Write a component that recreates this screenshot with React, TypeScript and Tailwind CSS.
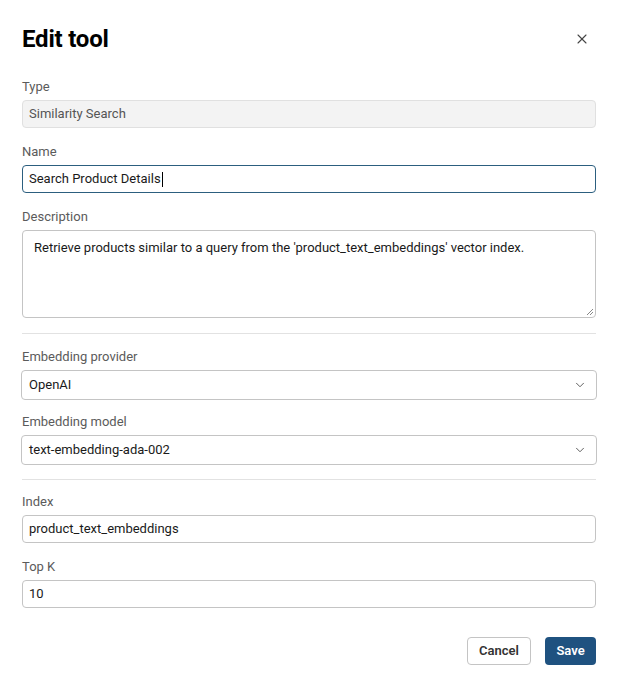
import { ChevronDown, X } from "lucide-react";

type FieldProps = {
  label: string;
  children: React.ReactNode;
};

function Field({ label, children }: FieldProps) {
  return (
    <div className="flex flex-col">
      <label className="mb-[5px] text-[13px] leading-[16px] text-[#5b5b5b]">{label}</label>
      {children}
    </div>
  );
}

function SelectBox({ value }: { value: string }) {
  return (
    <div className="-mx-px flex h-[30px] items-center justify-between rounded-[4px] border border-[#c4c4c4] bg-white pl-[7px] pr-[9px] text-[13px] text-[#1a1a1a]">
      <span>{value}</span>
      <ChevronDown className="h-[14px] w-[14px] text-[#555]" strokeWidth={1.6} />
    </div>
  );
}

export default function App() {
  return (
    <div className="min-h-[688px] bg-white px-[22px] pr-[23px] font-['Roboto',sans-serif] text-[#1a1a1a]">
      <header className="flex items-center justify-between pt-[25px]">
        <h1 className="text-[24px] font-bold leading-[28px] tracking-[-0.2px] text-black">Edit tool</h1>
        <button type="button" aria-label="Close" className="mr-[6px] text-[#444]">
          <X className="h-[16px] w-[16px]" strokeWidth={1.6} />
        </button>
      </header>

      <div className="mt-[26px] flex flex-col gap-[16px]">
        <Field label="Type">
          <div className="flex h-[28px] items-center rounded-[4px] border border-[#e0e0e0] bg-[#f3f3f3] px-[6px] text-[13px] text-[#555]">
            Similarity Search
          </div>
        </Field>

        <Field label="Name">
          <div className="flex h-[28px] items-center rounded-[4px] border border-[#2c5f7f] bg-white px-[6px] text-[13px] text-[#1a1a1a]">
            Search Product Details
            <span className="ml-px inline-block h-[15px] w-px bg-black" />
          </div>
        </Field>

        <Field label="Description">
          <div className="relative h-[88px] rounded-[4px] border border-[#c4c4c4] bg-white px-[11px] pt-[8px] text-[13px] leading-[18px] text-[#1a1a1a]">
            Retrieve products similar to a query from the 'product_text_embeddings' vector index.
            <svg className="absolute bottom-[1px] right-[1px] h-[8px] w-[8px]" viewBox="0 0 8 8">
              <path d="M7 1 L1 7 M7 4 L4 7" stroke="#888" strokeWidth="1" />
            </svg>
          </div>
        </Field>
      </div>

      <div className="mt-[15px] h-px bg-[#e2e2e2]" />

      <div className="mt-[15px] flex flex-col gap-[14px]">
        <Field label="Embedding provider">
          <SelectBox value="OpenAI" />
        </Field>
        <Field label="Embedding model">
          <SelectBox value="text-embedding-ada-002" />
        </Field>
      </div>

      <div className="mt-[14px] h-px bg-[#e2e2e2]" />

      <div className="mt-[14px] flex flex-col gap-[16px]">
        <Field label="Index">
          <div className="flex h-[28px] items-center rounded-[4px] border border-[#c4c4c4] bg-white px-[6px] text-[13px] text-[#1a1a1a]">
            product_text_embeddings
          </div>
        </Field>
        <Field label="Top K">
          <div className="flex h-[28px] items-center rounded-[4px] border border-[#c4c4c4] bg-white px-[6px] text-[13px] text-[#1a1a1a]">
            10
          </div>
        </Field>
      </div>

      <div className="mt-[29px] flex justify-end gap-[14px]">
        <button
          type="button"
          className="h-[28px] w-[64px] rounded-[4px] border border-[#c4c4c4] bg-white text-[13px] font-semibold text-[#333]"
        >
          Cancel
        </button>
        <button
          type="button"
          className="h-[28px] w-[51px] rounded-[4px] bg-[#1f5280] text-[13px] font-semibold text-white"
        >
          Save
        </button>
      </div>
    </div>
  );
}
